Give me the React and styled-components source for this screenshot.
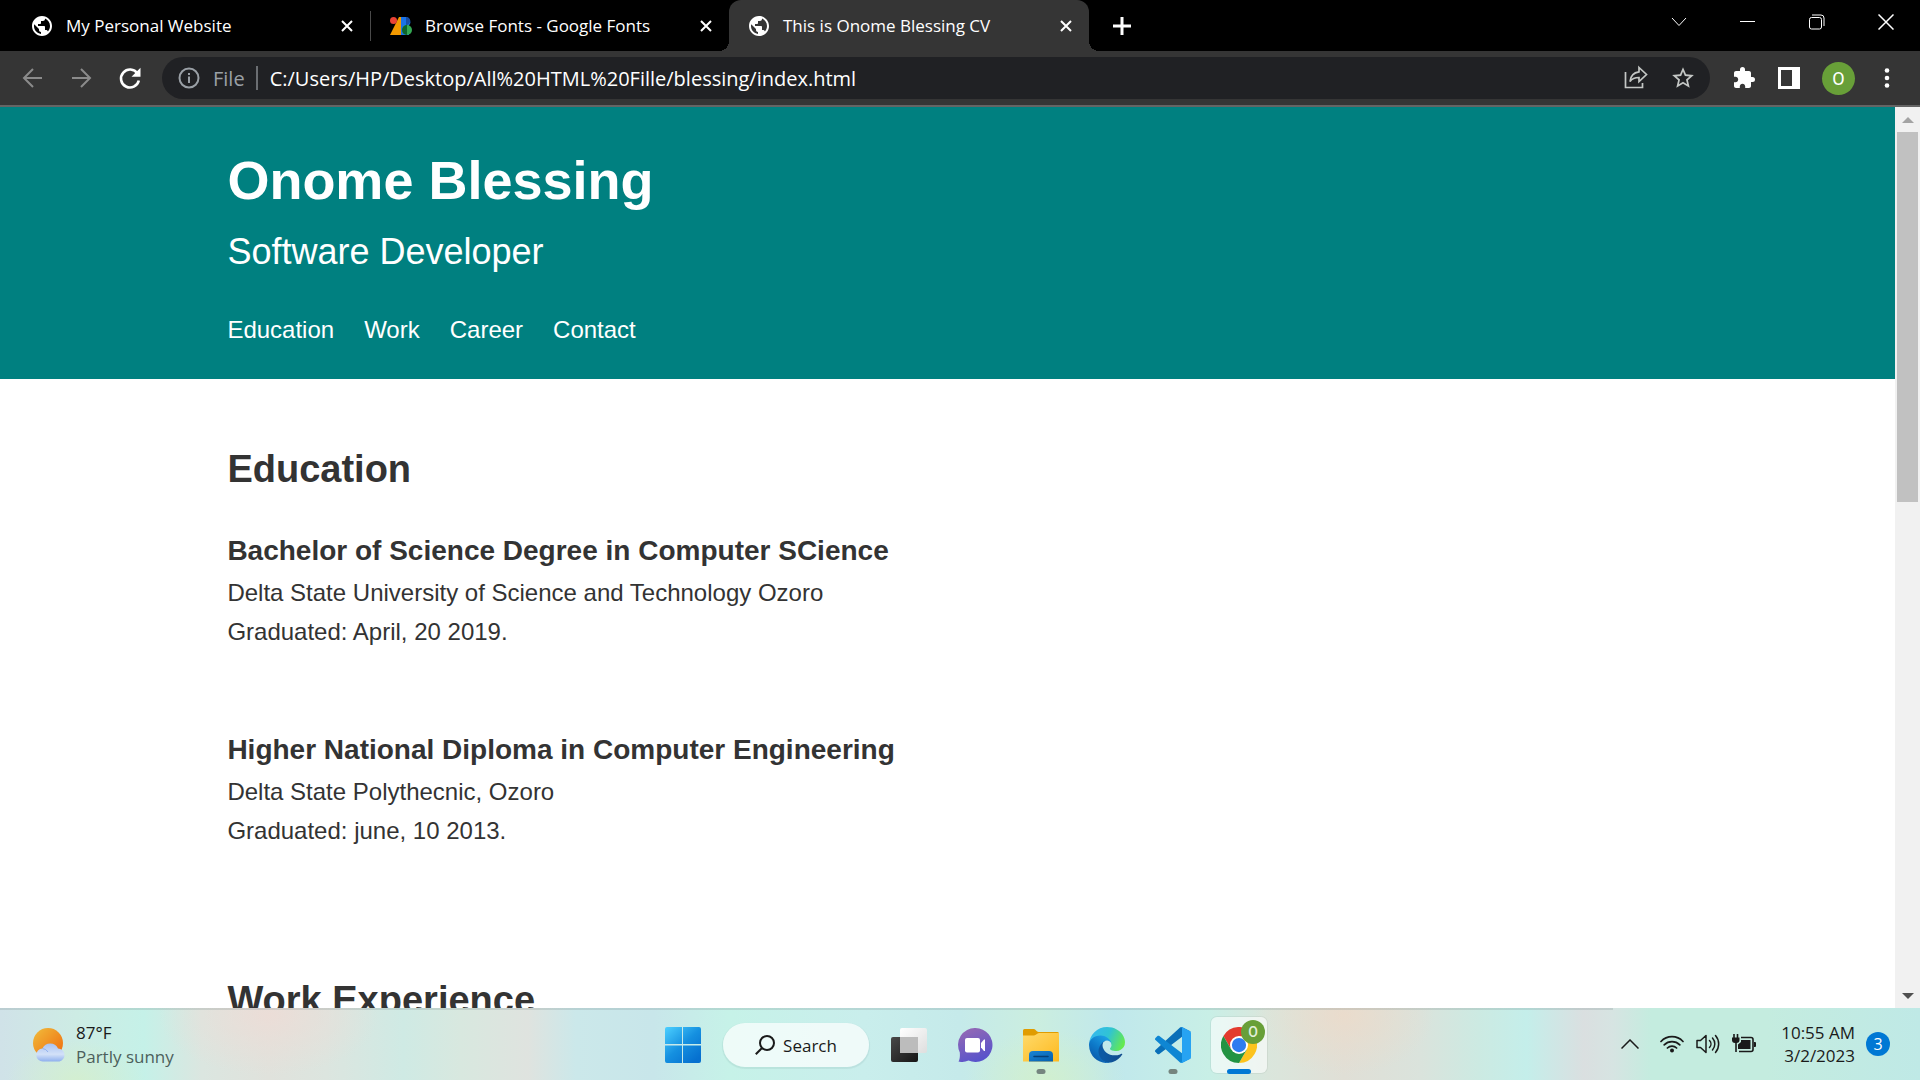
import React from "react";
import styled, { createGlobalStyle } from "styled-components";
import { MdPublic, MdStarBorder, MdExtension } from "react-icons/md";

const UI_FONT = '"Open Sans", "Noto Sans", sans-serif';
const PAGE_FONT = '"Liberation Sans", Arial, sans-serif';

const GlobalStyle = createGlobalStyle`
  *, *::before, *::after { box-sizing: border-box; }
  body { margin: 0; background: #fff; }
  h1, h2, h3, p, ul { margin: 0; padding: 0; }
  ul { list-style: none; }
  button { border: 0; padding: 0; background: none; color: inherit; font: inherit; cursor: pointer; }
  svg { display: block; flex: none; }
`;

const Desktop = styled.div`
  display: flex;
  flex-direction: column;
  height: 100vh;
  overflow: hidden;
  font-family: ${UI_FONT};
`;

/* ---------- tab strip ---------- */

const TabStrip = styled.div`
  display: flex;
  height: 51px;
  flex: none;
  padding-left: 12px;
  background: #000;
  color: #fff;
`;

const Tab = styled.div`
  position: relative;
  display: flex;
  align-items: center;
  gap: 12px;
  width: ${(p) => (p.$active ? 360 : 358)}px;
  padding: 0 17px 0 18px;
  font-size: 17px;
  background: ${(p) => (p.$active ? "#353535" : "transparent")};
  border-radius: ${(p) => (p.$active ? "12px 12px 0 0" : "0")};

  &::before,
  &::after {
    content: ${(p) => (p.$active ? '""' : "none")};
    position: absolute;
    bottom: 0;
    width: 10px;
    height: 10px;
  }
  &::before {
    left: -10px;
    background: radial-gradient(circle at 0 0, transparent 10px, #353535 10px);
  }
  &::after {
    right: -10px;
    background: radial-gradient(circle at 100% 0, transparent 10px, #353535 10px);
  }
`;

const TabTitle = styled.span`
  flex: 1;
  white-space: nowrap;
  line-height: 24px;
`;

const TabDivider = styled.span`
  align-self: center;
  width: 1px;
  height: 30px;
  background: #4a4a4a;
`;

const NewTab = styled.button`
  display: flex;
  align-items: center;
  padding: 0 24px;
`;

const WindowControls = styled.div`
  display: flex;
  margin-left: auto;
`;

const WindowButton = styled.button`
  display: flex;
  align-items: center;
  justify-content: center;
  width: 69px;
  height: 43px;
`;

/* ---------- toolbar ---------- */

const Toolbar = styled.div`
  display: flex;
  align-items: center;
  height: 56px;
  flex: none;
  padding: 0 23px 0 21px;
  background: #353535;
  border-bottom: 2px solid #646464;
  color: #fff;
`;

const NavButtons = styled.div`
  display: flex;
  align-items: center;
  gap: 24px;
  margin-right: 19px;
`;

const ToolButton = styled.button`
  display: flex;
  color: ${(p) => (p.$dim ? "#8b8b8b" : "#fff")};
`;

const Omnibox = styled.div`
  display: flex;
  align-items: center;
  flex: 1;
  height: 42px;
  padding: 0 14px 0 16px;
  border-radius: 21px;
  background: #202124;
`;

const SchemeLabel = styled.label`
  margin: 0 11px 0 13px;
  padding-top: 2px;
  font-size: 20px;
  line-height: 24px;
  color: #9aa0a6;
`;

const SchemeDivider = styled.span`
  width: 2px;
  height: 24px;
  margin-right: 12px;
  background: #6b6e72;
`;

const UrlInput = styled.input`
  flex: 1;
  min-width: 0;
  border: 0;
  padding: 2px 0 0;
  outline: none;
  background: transparent;
  color: #fff;
  font-family: ${UI_FONT};
  font-size: 20px;
  line-height: 24px;
`;

const OmniActions = styled.div`
  display: flex;
  gap: 22px;
`;

const Extensions = styled.div`
  display: flex;
  align-items: center;
  gap: 22px;
  margin-left: 22px;
`;

const Avatar = styled.button`
  width: 33px;
  height: 33px;
  border-radius: 50%;
  background: #689f38;
  font-family: Roboto, sans-serif;
  font-size: 18px;
  line-height: 33px;
  text-align: center;
`;

/* ---------- web page ---------- */

const Viewport = styled.div`
  display: flex;
  flex: 1;
  min-height: 0;
`;

const Page = styled.div`
  flex: 1;
  overflow: hidden;
  font-family: ${PAGE_FONT};
  font-size: 24px;
  line-height: 38px;
  color: #333;
`;

const Header = styled.header`
  padding: 30px 12%;
  background: #008080;
  color: #fff;
`;

const Name = styled.h1`
  font-size: 54px;
  line-height: 86px;
`;

const Role = styled.p`
  font-size: 36px;
  line-height: 58px;
`;

const Menu = styled.ul`
  display: flex;
  gap: 30px;
  margin-top: 30px;
`;

const MenuLink = styled.a`
  color: #fff;
  text-decoration: none;
`;

const Section = styled.section`
  padding: 60px 12%;
`;

const SectionTitle = styled.h2`
  margin-bottom: 30px;
  font-size: 38px;
  line-height: 60px;
`;

const Entry = styled.article`
  & + & {
    margin-top: 77px;
  }
`;

const EntryTitle = styled.h3`
  font-size: 28px;
  line-height: 44px;
`;

const EntryLine = styled.p`
  line-height: 39px;
`;

/* ---------- scrollbar ---------- */

const Scrollbar = styled.div`
  display: flex;
  flex-direction: column;
  width: 25px;
  background: #f1f1f1;
`;

const ScrollButton = styled.button`
  display: flex;
  align-items: center;
  justify-content: center;
  height: 25px;
  color: ${(p) => (p.$off ? "#a3a3a3" : "#505050")};
`;

const ScrollTrack = styled.div`
  flex: 1;
  padding: 0 2px;
`;

const ScrollThumb = styled.div`
  height: 43.5%;
  background: #c1c1c1;
`;

/* ---------- taskbar ---------- */

const Taskbar = styled.footer`
  display: grid;
  grid-template-columns: 1fr auto 1fr;
  align-items: center;
  height: 72px;
  flex: none;
  padding: 2px 0 0 2px;
  color: #1a1a1a;
  background:
    linear-gradient(90deg, rgba(90, 110, 110, 0.18) 84%, transparent 84%) top / 100% 2px no-repeat,
    radial-gradient(ellipse 70px 40px at 4% 100%, rgba(214, 240, 200, 0.7), transparent),
    radial-gradient(ellipse 80px 50px at 54.5% 100%, rgba(212, 240, 200, 0.7), transparent),
    radial-gradient(ellipse 110px 60px at 14% 10%, rgba(238, 220, 214, 0.8), transparent),
    radial-gradient(ellipse 90px 60px at 70% 10%, rgba(238, 218, 200, 0.7), transparent),
    linear-gradient(90deg,
      #d0e2e8 0%, #cdece4 4%, #c5f1e8 7.5%, #dbe6e0 10.5%, #e0e2dc 14%, #dce5df 17%,
      #cfeae4 21%, #d8e8df 24%, #dfe3df 27.5%, #cbe8ea 30%, #c8e6ea 34%, #c6f2e8 38%,
      #c9eeec 45%, #c5eaea 50%, #cbeedf 54%, #c0e8ec 58%, #c8efe6 63%, #dae6dc 66%,
      #e0dfd6 70%, #dae3dc 74%, #cceae2 77%, #c4eeea 79.5%, #dadfe0 82.5%, #d6e4e2 84%,
      #c4ecdf 86%, #c4ecdf 92%, #bfe9e6 100%);
`;

const Weather = styled.button`
  display: flex;
  align-items: center;
  gap: 10px;
  justify-self: start;
  margin-left: 31px;
  text-align: left;
  font-size: 17px;
  line-height: 24px;
`;

const Muted = styled.div`
  color: #4d5f5c;
`;

const AppRow = styled.nav`
  display: flex;
  align-items: center;
  gap: 10px;
`;

const AppButton = styled.button`
  position: relative;
  display: flex;
  align-items: center;
  justify-content: center;
  width: 56px;
  height: 56px;
  border-radius: 6px;
  background: ${(p) => (p.$active ? "rgba(255,255,255,0.6)" : "transparent")};
  box-shadow: ${(p) => (p.$active ? "0 0 0 1px rgba(0,0,0,0.05)" : "none")};
`;

const Indicator = styled.span`
  position: absolute;
  bottom: -1px;
  left: 50%;
  width: ${(p) => (p.$active ? 24 : 9)}px;
  height: 5px;
  border-radius: 3px;
  transform: translateX(-50%);
  background: ${(p) => (p.$active ? "#0078d4" : "#75857f")};
`;

const ProfileBadge = styled.span`
  position: absolute;
  top: 3px;
  right: 2px;
  width: 24px;
  height: 24px;
  border-radius: 50%;
  background: #689f38;
  color: #e3efda;
  font: 500 14px/24px Roboto, sans-serif;
  text-align: center;
`;

const SearchButton = styled.button`
  display: flex;
  align-items: center;
  justify-content: center;
  gap: 8px;
  width: 146px;
  height: 44px;
  margin: 0 2px;
  border-radius: 22px;
  background: rgba(255, 255, 255, 0.7);
  box-shadow: 0 1px 1px 1px rgba(0, 60, 60, 0.07);
  font-size: 17px;
`;

const Tray = styled.div`
  display: flex;
  align-items: center;
  justify-self: end;
  margin: 0 30px 2px 0;
`;

const TrayIcons = styled.div`
  display: flex;
  align-items: center;
  gap: 12px;
  margin-left: 21px;
`;

const Clock = styled.button`
  margin: 0 11px 0 25px;
  text-align: right;
  font-size: 17px;
  line-height: 23px;
`;

const Notices = styled.button`
  width: 24px;
  height: 24px;
  border-radius: 50%;
  background: #0078d4;
  color: #fff;
  font-size: 16px;
  line-height: 24px;
  text-align: center;
`;

/* ---------- drawings ---------- */

const Line = ({ w, h, d, sw = 2, ...rest }) => (
  <svg width={w} height={h} viewBox={`0 0 ${w} ${h}`} fill="none" stroke="currentColor" strokeWidth={sw} {...rest}>
    <path d={d} />
  </svg>
);

const Cross = () => <Line w={12} h={12} d="M1 1L11 11M11 1L1 11" />;

const ReloadIcon = () => (
  <svg width="26" height="26" viewBox="0 0 26 26">
    <path d="M20.500 8.500A9 9 0 1 0 21.800 15.500" fill="none" stroke="currentColor" strokeWidth="2.600" />
    <path d="M23.500 2.800V11.800H14.500Z" fill="currentColor" />
  </svg>
);

const FontsLogo = () => (
  <svg width="24" height="18" viewBox="-1 0 24 18">
    <path d="M9 0H13V18H0Z" fill="#f29900" />
    <path d="M11 0h5a5 5 0 0 1 3 8.500V18h-8z" fill="#1a73e8" />
    <circle cx="17" cy="13" r="5" fill="#34a853" />
    <path d="M17 8v10a5 5 0 0 1 0-10z" fill="#0d652d" />
    <path d="M16 0a4 4 0 0 1 0 8z" fill="#174ea6" />
    <circle cx="3.500" cy="3.500" r="3.500" fill="#ea4335" />
  </svg>
);

const ShareIcon = () => (
  <svg width="24" height="24" viewBox="0 0 24 24" fill="none" stroke="#c4c7c5" strokeWidth="1.700">
    <path d="M1.500 7V22.500H18.500V18" />
    <path d="M15 2.500L22.500 9.500L15 16.500V12.500C11 12.500 8 13.500 6 16.500C6.500 11 10 7.500 15 6.800Z" />
  </svg>
);

const SunCloud = () => (
  <svg width="33" height="34" viewBox="0 0 33 34">
    <defs>
      <linearGradient id="sun" x1="0" y1="0" x2="1" y2="1">
        <stop offset="0" stopColor="#f0bd3c" />
        <stop offset="1" stopColor="#f0680c" />
      </linearGradient>
      <linearGradient id="cloud" x1="0" y1="0" x2="0" y2="1">
        <stop offset="0" stopColor="#a9c2f2" />
        <stop offset="0.600" stopColor="#d3e1f8" />
        <stop offset="1" stopColor="#8fb0ee" />
      </linearGradient>
    </defs>
    <circle cx="15" cy="15" r="15" fill="url(#sun)" />
    <path d="M10 33.500a6.500 6.500 0 0 1-.5-13A8.500 8.500 0 0 1 25 20.500 6.600 6.600 0 0 1 26.500 33.500Z" fill="url(#cloud)" />
    <path d="M9.500 20.500A7 7 0 0 1 15 24" fill="none" stroke="#8fb0ee" strokeWidth="1" />
  </svg>
);

const WindowsLogo = () => (
  <svg width="36" height="36" viewBox="0 0 36 36">
    <defs>
      <linearGradient id="win" gradientUnits="userSpaceOnUse" x1="0" y1="0" x2="30" y2="34">
        <stop offset="0" stopColor="#4cd0ff" />
        <stop offset="0.550" stopColor="#1590e0" />
        <stop offset="1" stopColor="#0670cf" />
      </linearGradient>
    </defs>
    <path d="M2 0H17V17H0V2A2 2 0 0 1 2 0ZM18 0H34A2 2 0 0 1 36 2V17H18ZM0 18.500H17V36H2A2 2 0 0 1 0 34ZM18 18.500H36V34A2 2 0 0 1 34 36H18Z" fill="url(#win)" />
  </svg>
);

const TaskView = () => (
  <svg width="36" height="34" viewBox="0 0 36 34">
    <defs>
      <linearGradient id="tvb" x1="0" y1="0" x2="1" y2="1">
        <stop offset="0" stopColor="#484848" />
        <stop offset="1" stopColor="#161616" />
      </linearGradient>
      <linearGradient id="tvf" x1="0" y1="0" x2="1" y2="1">
        <stop offset="0" stopColor="#ffffff" />
        <stop offset="1" stopColor="#dedede" />
      </linearGradient>
    </defs>
    <rect x="0" y="9" width="27" height="25" rx="2" fill="url(#tvb)" />
    <rect x="9" y="0" width="27" height="25" rx="2" fill="url(#tvf)" />
    <rect x="9" y="9" width="18" height="16" fill="#bcbcbc" />
  </svg>
);

const ChatLogo = () => (
  <svg width="35" height="34" viewBox="0 0 35 34">
    <defs>
      <linearGradient id="chat" x1="0.200" y1="0" x2="0.600" y2="1">
        <stop offset="0" stopColor="#9569b4" />
        <stop offset="1" stopColor="#5652cc" />
      </linearGradient>
    </defs>
    <path d="M17.500 0A17 17 0 1 1 10.500 32.500C7 34 3 34.500 0.500 33.500C2 31 2 28 1.800 24.500A17 17 0 0 1 17.500 0Z" fill="url(#chat)" />
    <rect x="7" y="10" width="15" height="14.500" rx="2" fill="#fff" />
    <path d="M23 15L26 11.500H27V23H26L23 19.500Z" fill="#fff" />
  </svg>
);

const Folder = () => (
  <svg width="36" height="33" viewBox="0 0 36 33">
    <defs>
      <linearGradient id="fold" x1="0" y1="0" x2="1" y2="1">
        <stop offset="0" stopColor="#ffda6a" />
        <stop offset="1" stopColor="#fdb91f" />
      </linearGradient>
      <linearGradient id="tray" x1="0" y1="0" x2="1" y2="1">
        <stop offset="0" stopColor="#1a84d4" />
        <stop offset="1" stopColor="#0560ae" />
      </linearGradient>
    </defs>
    <path d="M1.500 0H11C12.500 0 13.500 3 15.500 3H34.500A1.500 1.500 0 0 1 36 4.500V10H0V1.500A1.500 1.500 0 0 1 1.500 0Z" fill="#e09c00" />
    <path d="M0 6.500H11C13 6.500 14 4 16 4H36V32.500H0Z" fill="url(#fold)" />
    <path d="M10 22H26A4 4 0 0 1 30 26V32.500H6V26A4 4 0 0 1 10 22Z" fill="url(#tray)" />
    <path d="M11 27.500H25" stroke="#063f76" strokeWidth="1.500" strokeLinecap="round" />
  </svg>
);

const EdgeLogo = () => (
  <svg width="36" height="36" viewBox="0 0 256 256">
    <defs>
      <linearGradient id="e1" x1="0.250" y1="0.500" x2="1" y2="0.500">
        <stop offset="0" stopColor="#0c59a4" />
        <stop offset="1" stopColor="#114a8b" />
      </linearGradient>
      <linearGradient id="e2" x1="0.800" y1="0.200" x2="0.300" y2="1">
        <stop offset="0" stopColor="#1b9de2" />
        <stop offset="0.500" stopColor="#0d78c8" />
        <stop offset="1" stopColor="#0b58a8" />
      </linearGradient>
      <linearGradient id="e3" x1="0" y1="0.300" x2="1" y2="0.600">
        <stop offset="0" stopColor="#35b8f0" />
        <stop offset="0.500" stopColor="#30c3d4" />
        <stop offset="1" stopColor="#66eb4c" />
      </linearGradient>
    </defs>
    <g transform="translate(-4.630 -4.920)">
      <path fill="url(#e1)" d="M235.680 195.460a93.730 93.730 0 0 1-10.540 4.710 101.870 101.870 0 0 1-35.900 6.460c-47.320 0-88.540-32.550-88.540-74.320A31.480 31.480 0 0 1 117.130 105.020c-42.800 1.800-53.800 46.400-53.800 72.530 0 73.880 68.090 81.370 82.760 81.370 7.910 0 19.840-2.300 27-4.560l1.310-.44a128.340 128.340 0 0 0 66.600-52.800 4 4 0 0 0-5.320-5.660z" />
      <path fill="url(#e2)" d="M110.340 246.340A79.200 79.200 0 0 1 87.600 225a80.720 80.720 0 0 1 29.530-120c3.120-1.470 8.450-4.130 15.540-4a32.350 32.350 0 0 1 25.690 13 31.880 31.880 0 0 1 6.360 18.660c0-.21 24.460-79.600-80-79.600-43.900 0-80 41.660-80 78.210a130.150 130.150 0 0 0 12.110 56 128 128 0 0 0 156.380 67.110 75.550 75.550 0 0 1-62.780-8z" />
      <path fill="url(#e3)" d="M156.940 153.780c-.81 1.050-3.300 2.500-3.300 5.660 0 2.610 1.700 5.120 4.720 7.230 14.380 10 41.490 8.680 41.560 8.680a59.560 59.560 0 0 0 30.270-8.350 61.380 61.380 0 0 0 30.430-52.880c.26-22.410-8-37.310-11.340-43.910C228.090 28.760 182.350 5 132.610 5a128 128 0 0 0-128 126.200c.48-36.540 36.800-66.050 80-66.050 3.500 0 23.460.34 42 10.070 16.340 8.580 24.900 18.940 30.850 29.210 6.180 10.670 7.280 24.150 7.280 29.520s-2.740 13.330-7.800 19.830z" />
    </g>
  </svg>
);

const CodeLogo = () => (
  <svg width="36" height="36" viewBox="0 0 100 100">
    <path fill="#0a6fb8" d="M96.461 10.796L75.857.876C73.472-.273 70.622.212 68.750 2.083L1.299 63.583c-1.815 1.654-1.813 4.511.004 6.162l5.510 5.009c1.485 1.350 3.722 1.450 5.321.237L93.361 13.370C96.086 11.303 100 13.246 100 16.667v-.24c0-2.400-1.375-4.589-3.539-5.631Z" />
    <path fill="#0f86d3" d="M96.461 89.204L75.857 99.124c-2.385 1.149-5.235.664-7.107-1.207L1.299 36.417c-1.815-1.654-1.813-4.511.004-6.162l5.510-5.009c1.485-1.350 3.722-1.450 5.321-.237L93.361 86.630C96.086 88.697 100 86.754 100 83.333v.24c0 2.400-1.375 4.589-3.539 5.631Z" />
    <path fill="#27a3f2" d="M75.858 99.126c-2.386 1.148-5.236.662-7.108-1.210C71.056 100.223 75 98.590 75 95.328V4.672C75 1.410 71.056-.223 68.750 2.083c1.872-1.872 4.722-2.357 7.108-1.210l20.601 9.908C98.623 11.822 100 14.011 100 16.413v67.174c0 2.402-1.377 4.592-3.541 5.633L75.858 99.126Z" />
  </svg>
);

const ChromeLogo = () => (
  <svg width="36" height="36" viewBox="0 0 48 48">
    <path fill="#e33b2e" d="M3.200 12A24 24 0 0 1 44.800 12H24L13.600 30Z" />
    <path fill="#fcc31e" d="M44.800 12A24 24 0 0 1 24 48L34.400 30L24 12Z" />
    <path fill="#229342" d="M24 48A24 24 0 0 1 3.200 12L13.600 30H34.400Z" />
    <circle cx="24" cy="24" r="12" fill="#fff" />
    <circle cx="24" cy="24" r="9.500" fill="#2d7cf0" />
  </svg>
);

const Wifi = () => (
  <svg width="24" height="18" viewBox="0 0 24 18" fill="none" stroke="currentColor" strokeWidth="1.700" strokeLinecap="round">
    <path d="M1 6.500A15 15 0 0 1 23 6.500M4.200 9.800A11 11 0 0 1 19.800 9.800M7.400 13A6.500 6.500 0 0 1 16.600 13" />
    <circle cx="12" cy="15.500" r="2" fill="currentColor" stroke="none" />
  </svg>
);

const Speaker = () => (
  <svg width="24" height="20" viewBox="0 0 24 20" fill="none" stroke="currentColor" strokeWidth="1.500" strokeLinecap="round" strokeLinejoin="round">
    <path d="M1 6.500H4.500L10 1.500V18.500L4.500 13.500H1Z" />
    <path d="M13.500 6.500A5 5 0 0 1 13.500 13.500M16.500 4A9 9 0 0 1 16.500 16M19.500 1.500A13 13 0 0 1 19.500 18.500" />
  </svg>
);

const Battery = () => (
  <svg width="24" height="20" viewBox="0 0 24 20" fill="none" stroke="currentColor" strokeWidth="1.600">
    <path d="M9 3.500H19A2 2 0 0 1 21 5.500V15.500A2 2 0 0 1 19 17.500H7" />
    <path d="M9 6H18.500V15H6V10.500L9 8Z" fill="currentColor" stroke="none" />
    <path d="M22 8h1a1 1 0 0 1 1 1v3a1 1 0 0 1-1 1h-1z" fill="currentColor" stroke="none" />
    <path d="M0 3.500H7.500V6A3 3 0 0 1 4.500 9H3A3 3 0 0 1 0 6Z" fill="currentColor" stroke="none" />
    <path d="M2 0V4M5.500 0V4M4 8V18" />
  </svg>
);

const TABS = [
  { title: "My Personal Website", icon: <MdPublic size={24} /> },
  { title: "Browse Fonts - Google Fonts", icon: <FontsLogo /> },
  { title: "This is Onome Blessing CV", icon: <MdPublic size={24} />, active: true },
];

const EDUCATION = [
  {
    title: "Bachelor of Science Degree in Computer SCience",
    school: "Delta State University of Science and Technology Ozoro",
    date: "Graduated: April, 20 2019.",
  },
  {
    title: "Higher National Diploma in Computer Engineering",
    school: "Delta State Polythecnic, Ozoro",
    date: "Graduated: june, 10 2013.",
  },
];

const APPS = [
  { name: "Task view", icon: <TaskView /> },
  { name: "Chat", icon: <ChatLogo /> },
  { name: "File Explorer", icon: <Folder />, running: true },
  { name: "Edge", icon: <EdgeLogo /> },
  { name: "Visual Studio Code", icon: <CodeLogo />, running: true },
  { name: "Chrome", icon: <ChromeLogo />, running: true, active: true },
];

export default function App() {
  return (
    <Desktop>
      <GlobalStyle />
      <TabStrip>
        {TABS.map((tab, i) => (
          <React.Fragment key={tab.title}>
            <Tab $active={tab.active}>
              {tab.icon}
              <TabTitle>{tab.title}</TabTitle>
              <button aria-label="Close tab"><Cross /></button>
            </Tab>
            {i === 0 && <TabDivider />}
          </React.Fragment>
        ))}
        <NewTab aria-label="New tab">
          <Line w={18} h={18} d="M9 0V18M0 9H18" sw={3} />
        </NewTab>
        <WindowControls>
          <WindowButton aria-label="Search tabs"><Line w={16} h={10} d="M1 1L8 8.500L15 1" sw={1} /></WindowButton>
          <WindowButton aria-label="Minimize"><Line w={15} h={1} d="M0 .5H15" sw={1} /></WindowButton>
          <WindowButton aria-label="Restore">
            <Line w={16} h={16} d="M2.500 3.500H10.500A2 2 0 0 1 12.500 5.500V13A2 2 0 0 1 10.500 15H2.500A2 2 0 0 1 .5 13V5.500A2 2 0 0 1 2.500 3.500ZM3 1H12A3 3 0 0 1 15 4V12" sw={1} />
          </WindowButton>
          <WindowButton aria-label="Close"><Line w={16} h={16} d="M.5 .5L15.500 15.500M15.500 .5L.5 15.500" sw={1.5} /></WindowButton>
        </WindowControls>
      </TabStrip>

      <Toolbar>
        <NavButtons>
          <ToolButton $dim aria-label="Back"><Line w={24} h={24} d="M21 12H3M12 3L3 12L12 21" /></ToolButton>
          <ToolButton $dim aria-label="Forward"><Line w={24} h={24} d="M3 12H21M12 3L21 12L12 21" /></ToolButton>
          <ToolButton aria-label="Reload"><ReloadIcon /></ToolButton>
        </NavButtons>
        <Omnibox>
          <svg width="22" height="22" viewBox="0 0 22 22" fill="none" stroke="#9aa0a6" strokeWidth="2">
            <circle cx="11" cy="11" r="9.500" />
            <path d="M11 9.500V16M11 6V8" />
          </svg>
          <SchemeLabel htmlFor="address">File</SchemeLabel>
          <SchemeDivider />
          <UrlInput id="address" defaultValue="C:/Users/HP/Desktop/All%20HTML%20Fille/blessing/index.html" />
          <OmniActions>
            <ToolButton aria-label="Share"><ShareIcon /></ToolButton>
            <ToolButton aria-label="Bookmark"><MdStarBorder size={26} color="#c4c7c5" /></ToolButton>
          </OmniActions>
        </Omnibox>
        <Extensions>
          <ToolButton aria-label="Extensions"><MdExtension size={24} /></ToolButton>
          <ToolButton aria-label="Side panel">
            <svg width="22" height="22" viewBox="0 0 22 22">
              <path d="M0 0H22V22H0ZM3 3V19H14V3Z" fill="#fff" fillRule="evenodd" />
            </svg>
          </ToolButton>
          <Avatar>O</Avatar>
          <ToolButton aria-label="Menu">
            <svg width="20" height="20" viewBox="0 0 20 20" fill="#fff">
              <circle cx="10" cy="2.500" r="2.300" />
              <circle cx="10" cy="10" r="2.300" />
              <circle cx="10" cy="17.500" r="2.300" />
            </svg>
          </ToolButton>
        </Extensions>
      </Toolbar>

      <Viewport>
        <Page>
          <Header>
            <Name>Onome Blessing</Name>
            <Role>Software Developer</Role>
            <nav>
              <Menu>
                {["Education", "Work", "Career", "Contact"].map((item) => (
                  <li key={item}><MenuLink href={`#${item.toLowerCase()}`}>{item}</MenuLink></li>
                ))}
              </Menu>
            </nav>
          </Header>
          <main>
            <Section id="education">
              <SectionTitle>Education</SectionTitle>
              {EDUCATION.map((e) => (
                <Entry key={e.title}>
                  <EntryTitle>{e.title}</EntryTitle>
                  <EntryLine>{e.school}</EntryLine>
                  <EntryLine>{e.date}</EntryLine>
                </Entry>
              ))}
            </Section>
            <Section id="work">
              <SectionTitle>Work Experience</SectionTitle>
            </Section>
          </main>
        </Page>
        <Scrollbar>
          <ScrollButton $off aria-label="Scroll up">
            <svg width="12" height="6" viewBox="0 0 12 6"><path d="M6 0L12 6H0Z" fill="currentColor" /></svg>
          </ScrollButton>
          <ScrollTrack><ScrollThumb /></ScrollTrack>
          <ScrollButton aria-label="Scroll down">
            <svg width="12" height="6" viewBox="0 0 12 6"><path d="M0 0H12L6 6Z" fill="currentColor" /></svg>
          </ScrollButton>
        </Scrollbar>
      </Viewport>

      <Taskbar>
        <Weather>
          <SunCloud />
          <div>
            <div>87°F</div>
            <Muted>Partly sunny</Muted>
          </div>
        </Weather>
        <AppRow>
          <AppButton aria-label="Start"><WindowsLogo /></AppButton>
          <SearchButton>
            <svg width="20" height="20" viewBox="0 0 20 20" fill="none" stroke="currentColor" strokeWidth="2">
              <circle cx="12" cy="8" r="7" />
              <path d="M7 13L0.800 19.200" />
            </svg>
            Search
          </SearchButton>
          {APPS.map((app) => (
            <AppButton key={app.name} aria-label={app.name} $active={app.active}>
              {app.icon}
              {app.active && <ProfileBadge>O</ProfileBadge>}
              {app.running && <Indicator $active={app.active} />}
            </AppButton>
          ))}
        </AppRow>
        <Tray>
          <button aria-label="Hidden icons"><Line w={18} h={10} d="M.5 9.500L9 1L17.500 9.500" sw={1.5} /></button>
          <TrayIcons>
            <Wifi />
            <Speaker />
            <Battery />
          </TrayIcons>
          <Clock>
            <div>10:55 AM</div>
            <div>3/2/2023</div>
          </Clock>
          <Notices>3</Notices>
        </Tray>
      </Taskbar>
    </Desktop>
  );
}
